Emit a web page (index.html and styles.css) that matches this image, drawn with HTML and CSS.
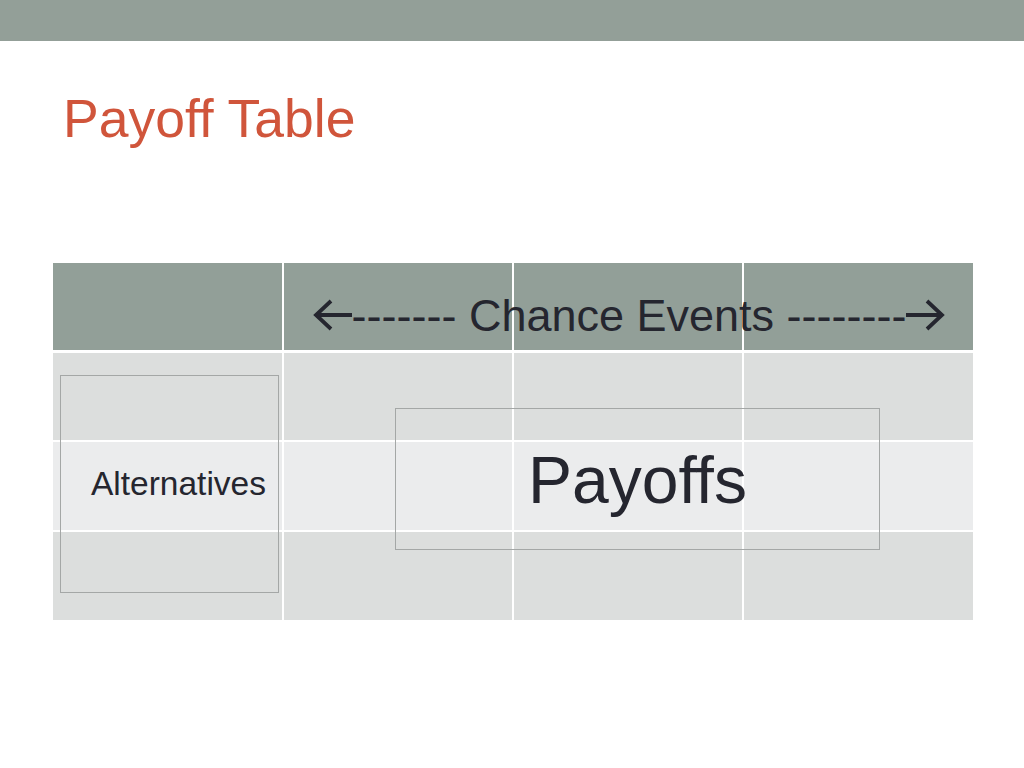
FILE: index.html
```html
<!DOCTYPE html>
<html lang="en">
<head>
<meta charset="utf-8">
<title>Payoff Table</title>
<link rel="stylesheet" href="styles.css">
</head>
<body>
<div class="slide">
  <div class="topbar"></div>
  <h1 class="title">Payoff Table</h1>
  <div class="table">
    <div class="cell head c1"></div>
    <div class="cell head c2"></div>
    <div class="cell head c3"></div>
    <div class="cell head c4"></div>
    <div class="head-text">
      <svg class="arrow" width="40" height="32" viewBox="0 0 40 32"><path d="M40 16H4M19 2L4 16L19 30" fill="none" stroke="#25262f" stroke-width="3.8" stroke-linejoin="miter"/></svg><span>------- Chance Events --------</span><svg class="arrow" width="41" height="32" viewBox="0 0 41 32"><path d="M0 16H36M21 2L36 16L21 30" fill="none" stroke="#25262f" stroke-width="3.8" stroke-linejoin="miter"/></svg>
    </div>
    <div class="cell dark"></div>
    <div class="cell dark"></div>
    <div class="cell dark"></div>
    <div class="cell dark"></div>
    <div class="cell light"></div>
    <div class="cell light"></div>
    <div class="cell light"></div>
    <div class="cell light"></div>
    <div class="cell dark"></div>
    <div class="cell dark"></div>
    <div class="cell dark"></div>
    <div class="cell dark"></div>
    <div class="textbox alt-box">Alternatives</div>
    <div class="textbox pay-box">Payoffs</div>
  </div>
</div>
</body>
</html>
```
FILE: styles.css
```css
html, body {
  margin: 0;
  padding: 0;
  background: #ffffff;
}

.slide {
  width: 1024px;
  height: 768px;
  overflow: hidden;
  font-family: "Liberation Sans", Arial, sans-serif;
  color: #25262f;
}

.topbar {
  height: 41px;
  background: #939f98;
}

.title {
  margin: 48px 0 0 0;
  padding-left: 63px;
  font-size: 53.5px;
  line-height: 60px;
  font-weight: normal;
  color: #d0553b;
}

.table {
  position: relative;
  margin: 114px 0 0 53px;
  width: 920px;
  display: grid;
  grid-template-columns: 229px 228px 228px 229px;
  grid-template-rows: 88px 87px 88px 88px;
  column-gap: 2px;
  row-gap: 2px;
}

.cell.head {
  grid-row: 1;
  background: #929f98;
  margin-bottom: 1px;
}

.cell.c1 { grid-column: 1; }
.cell.c2 { grid-column: 2; }
.cell.c3 { grid-column: 3; }
.cell.c4 { grid-column: 4; }

.cell.dark {
  background: #dcdedd;
}

.cell.light {
  background: #ebeced;
}

.head-text {
  grid-row: 1;
  grid-column: 2 / 5;
  z-index: 1;
  display: flex;
  justify-content: center;
  align-items: center;
  padding-top: 16px;
  padding-left: 2px;
  font-size: 45px;
  line-height: 45px;
  white-space: nowrap;
}

.arrow {
  flex: none;
}

.textbox {
  position: absolute;
  box-sizing: border-box;
  border: 1px solid #a4a7a6;
  display: flex;
  align-items: center;
}

.alt-box {
  left: 7px;
  top: 112px;
  width: 219px;
  height: 218px;
  justify-content: flex-end;
  padding-right: 12px;
  font-size: 33.5px;
}

.pay-box {
  left: 342px;
  top: 145px;
  width: 485px;
  height: 142px;
  justify-content: center;
  font-size: 66px;
  padding-top: 2px;
}
```
